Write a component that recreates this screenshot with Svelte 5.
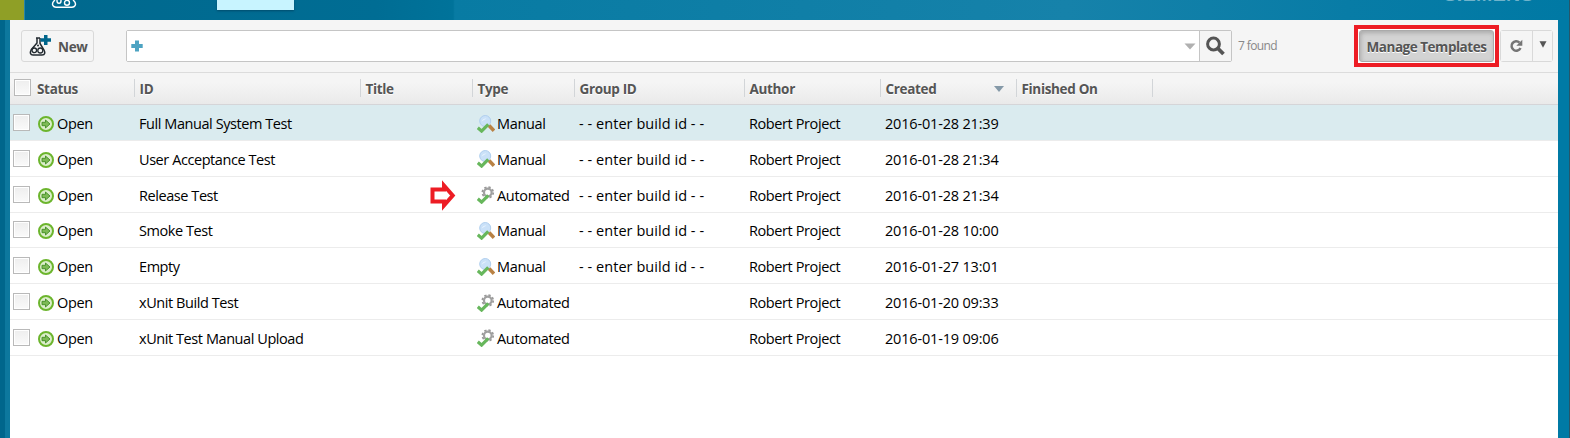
<script>
  const columns = ['Status', 'ID', 'Title', 'Type', 'Group ID', 'Author', 'Created', 'Finished On'];
  const build = '- - enter build id - -';
  const runs = [
    { id: 'Full Manual System Test', type: 'Manual', group: build, created: '2016-01-28 21:39', selected: true },
    { id: 'User Acceptance Test', type: 'Manual', group: build, created: '2016-01-28 21:34' },
    { id: 'Release Test', type: 'Automated', group: build, created: '2016-01-28 21:34', marked: true },
    { id: 'Smoke Test', type: 'Manual', group: build, created: '2016-01-28 10:00' },
    { id: 'Empty', type: 'Manual', group: build, created: '2016-01-27 13:01' },
    { id: 'xUnit Build Test', type: 'Automated', group: '', created: '2016-01-20 09:33' },
    { id: 'xUnit Test Manual Upload', type: 'Automated', group: '', created: '2016-01-19 09:06' }
  ];
</script>

<div class="app">
  <header>
    <div class="corner"></div>
    <svg class="brand" width="26" height="8" viewBox="0 0 26 8" fill="none" stroke="#fff" stroke-width="1.4">
      <path d="M4 0C1.5 2 1 4 2 5.7Q2.8 7.2 5 7.2H21Q23.2 7.2 24 5.7C25 4 24.500 2 22 0" />
      <path d="M6 0V1a2 2.200 0 0 0 4 0V0" />
      <circle cx="16" cy="2.800" r="2.500" />
    </svg>
    <div class="tab"></div>
    <div class="logo">SIEMENS</div>
  </header>
  <main>
    <div class="toolbar">
      <button class="new">
        <svg width="22" height="22" viewBox="0 0 22 22" fill="none">
          <path d="M7 4h4M8 4v5L2.200 15.800Q1 18 1.500 19.500Q2 21 4 21H13Q15.300 21 15.700 19.300Q16 18 15 16L11 9.500V4" stroke="#222a30" stroke-width="1.500" />
          <circle cx="5.300" cy="16.300" r="2.300" stroke="#222a30" stroke-width="1.300" />
          <circle cx="11.300" cy="16.500" r="2.500" stroke="#222a30" stroke-width="1.300" />
          <circle cx="9" cy="11.500" r="1" fill="#222a30" />
          <path d="M15 1h3.500v3.300H22v3.400h-3.500V11H15V7.700h-3.500V4.300H15z" fill="#00668c" />
        </svg>
        <span>New</span>
      </button>
      <div class="search">
        <div class="field">
          <svg width="12" height="12" viewBox="0 0 12 12"><path d="M4 .5h4V4h3.700v4H8v3.500H4V8H.3V4H4z" fill="#4da3c2" /></svg>
          <svg width="12" height="7" viewBox="0 0 12 7"><path d="M.5 .5h11L6 6.500z" fill="#b0b0b0" /></svg>
        </div>
        <button aria-label="Search">
          <svg width="20" height="20" viewBox="0 0 20 20" fill="none" stroke="#555"><circle cx="7.500" cy="8" r="5.900" stroke-width="3" /><path d="M12 12.500l5.500 5.500" stroke-width="3.800" /></svg>
        </button>
      </div>
      <span class="found">7 found</span>
      <div class="frame"><button class="templates">Manage Templates</button></div>
      <div class="actions">
        <button aria-label="Refresh">
          <svg width="14" height="14" viewBox="0 0 14 14"><path d="M10.500 3.600A4.700 4.700 0 1 0 11.500 9" fill="none" stroke="#757575" stroke-width="2.500" /><path d="M13.300 .7v6H7.300z" fill="#757575" /></svg>
        </button>
        <button aria-label="More">
          <svg width="8" height="7" viewBox="0 0 8 7"><path d="M.5 .3h7L4 6.700z" fill="#555" /></svg>
        </button>
      </div>
    </div>
    <div class="grid head">
      {#each columns as c, i}
        <div class="cell">
          {#if i === 0}<i class="box"></i>{/if}
          <span>{c}</span>
          {#if c === 'Created'}
            <svg class="sort" width="10" height="6" viewBox="0 0 10 6"><path d="M0 0h10L5 6z" fill="#8599a8" /></svg>
          {/if}
        </div>
      {/each}
      <div class="cell"></div>
    </div>
    {#each runs as r}
      <div class="grid row" class:selected={r.selected}>
        <div class="cell">
          <i class="box"></i>
          <svg class="open" width="16" height="16" viewBox="0 0 16 16">
            <circle cx="8" cy="8" r="7" fill="#dceecb" stroke="#6cb52d" stroke-width="2" />
            <path d="M4 6.300h3.500V4L12 8l-4.500 4V9.700H4z" fill="#7dba55" stroke="#438c25" stroke-width=".9" />
          </svg>
          <span class="t-open">Open</span>
        </div>
        <div class="cell t-id">{r.id}</div>
        <div class="cell title">
          {#if r.marked}
            <svg width="26" height="33" viewBox="0 0 26 33"><path d="M2.500 10.500H14V6.500L22.700 16.500L14 26.500V22.500H2.500z" fill="#fff" stroke="#ed1c24" stroke-width="4" /></svg>
          {/if}
        </div>
        <div class="cell">
          <svg class="kind" width="18" height="18" viewBox="0 0 18 18">
            {#if r.type === 'Manual'}
              <path d="M12 10.500l5 5.300" stroke="#b98244" stroke-width="3.600" />
              <circle cx="8.200" cy="6" r="5.500" fill="#cae1f8" stroke="#b0cfee" stroke-width="1" />
              <path d="M4.500 6.500Q6 3 9.500 3.500Q7 5 4.500 6.500" fill="#e7f3fe" />
            {:else}
              <circle cx="10.800" cy="6.500" r="5.400" fill="none" stroke="#999" stroke-width="1.800" stroke-dasharray="2.240 2" />
              <circle cx="10.800" cy="6.500" r="3.800" fill="none" stroke="#a0a0a0" stroke-width="2.200" />
            {/if}
            <path d="M.8 12.800l3.800 3.300L11.300 9.300" fill="none" stroke="#67b75c" stroke-width="3.200" />
          </svg>
          <span class="t-type">{r.type}</span>
        </div>
        <div class="cell t-group">{r.group}</div>
        <div class="cell t-author">Robert Project</div>
        <div class="cell t-date">{r.created}</div>
        <div class="cell"></div>
        <div class="cell"></div>
      </div>
    {/each}
  </main>
</div>

<style>
  :global(body) { margin: 0; }
  .app {
    height: 438px; overflow: hidden; display: flex; flex-direction: column;
    font-family: "Open Sans", "Noto Sans", sans-serif;
    background: linear-gradient(90deg, #00668c 0 5px, #0d789e 5px 10px, #007aa5 10px);
    box-shadow: inset -1px 0 #285568;
  }
  header {
    height: 20px; flex: none; display: flex; align-items: flex-start; overflow: hidden;
    background: linear-gradient(90deg, #00688d 0, #006d94 24%, #00739a 28.9%, #087ba3 29%, #1682aa 68%, #087ca6 86%, #0079a4 100%);
    margin-right: 2px;
  }
  .corner { width: 24px; height: 20px; background: #8f9f26; border-right: 1px solid #2b85a5; }
  .brand { margin-left: 26px; }
  .tab { width: 77px; height: 10px; margin-left: 140px; background: #c8f4ff; box-shadow: 0 1px 2px #004c6c; }
  .logo { margin: -16px 34px 0 auto; font: bold 19.500px/20px "Liberation Sans", Arial, sans-serif; color: #70b3cb; letter-spacing: .4px; }
  main { flex: 1; margin: 0 12px 0 10px; background: #fff; }
  button { box-sizing: border-box; padding: 0; border: 1px solid #d9d9d9; background: #f5f5f5; font-family: inherit; display: flex; align-items: center; justify-content: center; }
  .toolbar { height: 52px; background: #f5f5f5; display: flex; align-items: flex-start; padding: 10px 5px 0 11px; box-sizing: border-box; }
  .new { width: 73px; height: 32px; border-radius: 3px; justify-content: flex-start; padding-left: 7px; }
  .new svg { margin-top: -3px; }
  .new span { margin: 1px 0 0 7px; font-size: 13.500px; font-weight: 700; color: #555; letter-spacing: -.3px; }
  .search { width: 1106px; height: 32px; margin-left: 32px; display: flex; box-sizing: border-box; border: 1px solid #c5c5c5; border-radius: 2px; }
  .field { flex: 1; background: #fff; display: flex; align-items: center; justify-content: space-between; padding: 0 3px 0 4px; }
  .search button { width: 32px; height: 30px; border: 0; border-left: 1px solid #c5c5c5; }
  .found { margin: 7px 0 0 6px; font-size: 12px; line-height: 18px; color: #888; letter-spacing: -.6px; }
  .frame { width: 145px; height: 42px; box-sizing: border-box; border: 4px solid #ed1c24; margin: -5px 1px 0 auto; padding: 1px; background: #fff; }
  .templates { width: 100%; height: 100%; border: 1px solid #aaa; border-radius: 3px; background: #d3d3d3; box-shadow: inset 1px 2px 4px #aaa; font-size: 13.500px; font-weight: 700; color: #555; text-shadow: 0 1px #fff; letter-spacing: -.47px; white-space: nowrap; padding-top: 1px; }
  .actions { display: flex; width: 53px; height: 32px; box-sizing: border-box; border: 1px solid #d9d9d9; border-radius: 3px; }
  .actions button { border: 0; width: 31px; height: 30px; padding-right: 1px; }
  .actions button + button { width: 20px; border-left: 1px solid #d9d9d9; padding: 0 0 3px; }
  .grid { display: grid; grid-template-columns: 124px 226px 112px 102px 170px 136px 136px 136px 1fr; }
  .cell { display: flex; align-items: center; min-width: 0; white-space: nowrap; padding-left: 5px; }
  .cell:first-child { padding-left: 3px; }
  .box { width: 15px; height: 15px; flex: none; border: 1px solid #b9b9b9; background: linear-gradient(#eee, #fafafa); box-shadow: inset 0 0 0 1px #fff; }
  .head { height: 33px; box-sizing: border-box; border-top: 1px solid #dcdcdc; border-bottom: 1px solid #d5d5d8; background: linear-gradient(#f5f5f5 30%, #eaeaea); color: #555; font-size: 13.500px; font-weight: 700; letter-spacing: -.33px; text-shadow: 0 1px #fff; }
  .head .cell { height: 31px; }
  .head .cell + .cell { height: 18px; margin-top: 6px; border-left: 1px solid #d2d5d8; padding-left: 4.500px; }
  .head .cell + .cell span { margin-top: 1px; }
  .head .cell:first-child { padding-left: 4px; }
  .head .cell:first-child .box { margin-top: -2px; }
  .head .cell:first-child span { margin: 0 0 0 6px; }
  .sort { margin: 2px 12px 0 auto; }
  .row { height: 35.800px; box-sizing: border-box; border-bottom: 1px solid #ececec; font-size: 14.500px; color: #000; letter-spacing: -.33px; }
  .head + .row { height: 36px; }
  .row.selected { background: #daebef; }
  .row .cell { padding-top: 2px; }
  .row .box { margin-top: -2px; }
  .open { margin: 1px 0 0 8px; flex: none; }
  .t-open { margin-left: 3px; }
  .t-id { letter-spacing: -.43px; }
  .t-group { letter-spacing: .05px; }
  .t-author { letter-spacing: -.4px; }
  .t-date { letter-spacing: -.18px; }
  .kind { margin-top: 0; flex: none; }
  .t-type { margin-left: 2px; }
  .title { justify-content: flex-end; padding-right: 16px; }
</style>
